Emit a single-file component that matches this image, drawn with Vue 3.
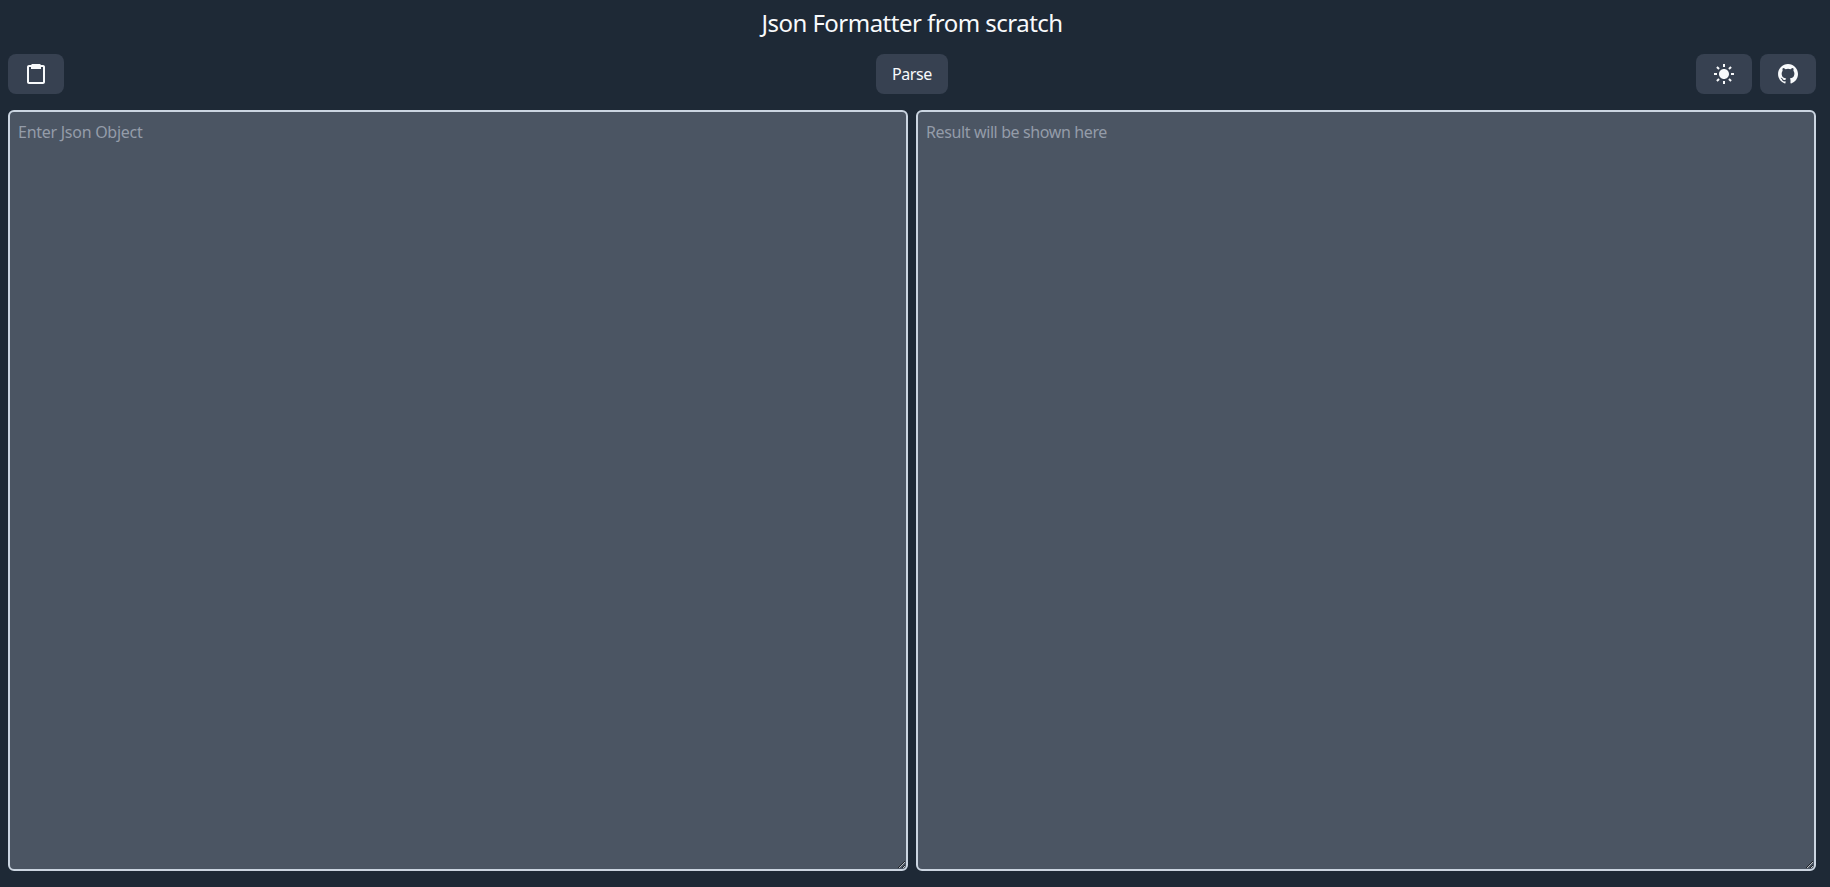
<script setup>
import { ref } from 'vue'

const source = ref('')
const result = ref('')

function parse() {
  try {
    result.value = JSON.stringify(JSON.parse(source.value), null, 2)
  } catch (error) {
    result.value = error.message
  }
}

async function paste() {
  source.value = await navigator.clipboard.readText()
}
</script>

<template>
  <main class="page">
    <h1 class="title">Json Formatter from scratch</h1>
    <div class="toolbar">
      <div class="side">
        <button class="btn" aria-label="Paste" @click="paste">
          <svg viewBox="0 0 24 24" fill="currentColor">
            <path d="M19 3h-2.25a1 1 0 0 0-1-1h-7.5a1 1 0 0 0-1 1H5c-1.103 0-2 .897-2 2v15c0 1.103.897 2 2 2h14c1.103 0 2-.897 2-2V5c0-1.103-.897-2-2-2zm0 17H5V5h2v2h10V5h2v15z" />
          </svg>
        </button>
      </div>
      <button class="btn parse" @click="parse">Parse</button>
      <div class="side end">
        <button class="btn" aria-label="Theme">
          <svg viewBox="0 0 24 24" fill="currentColor">
            <path d="M6.993 12c0 2.761 2.246 5.007 5.007 5.007s5.007-2.246 5.007-5.007S14.761 6.993 12 6.993 6.993 9.239 6.993 12zM10.998 19h2v3h-2zm0-17h2v3h-2zm-9 9h3v2h-3zm17 0h3v2h-3zM4.219 18.363l2.12-2.122 1.415 1.414-2.12 2.122zM16.24 6.344l2.122-2.122 1.414 1.414-2.122 2.122zM6.342 7.759 4.22 5.637l1.415-1.414 2.12 2.122zM19.776 18.364l-1.414 1.414-2.122-2.122 1.414-1.414z" />
          </svg>
        </button>
        <button class="btn" aria-label="GitHub">
          <svg viewBox="0 0 24 24" fill="currentColor">
            <path fill-rule="evenodd" clip-rule="evenodd" d="M12.026 2c-5.509 0-9.974 4.465-9.974 9.974 0 4.406 2.857 8.145 6.821 9.465.499.09.679-.217.679-.481 0-.237-.008-.865-.011-1.696-2.775.602-3.361-1.338-3.361-1.338-.452-1.152-1.107-1.459-1.107-1.459-.905-.619.069-.605.069-.605 1.002.07 1.527 1.028 1.527 1.028.89 1.524 2.336 1.084 2.902.829.091-.645.351-1.085.635-1.334-2.214-.251-4.542-1.107-4.542-4.93 0-1.087.389-1.979 1.024-2.675-.101-.253-.446-1.268.099-2.64 0 0 .837-.269 2.742 1.021a9.582 9.582 0 0 1 2.496-.336 9.554 9.554 0 0 1 2.496.336c1.906-1.291 2.742-1.021 2.742-1.021.545 1.372.203 2.387.099 2.64.64.696 1.024 1.587 1.024 2.675 0 3.833-2.33 4.675-4.552 4.922.355.308.675.916.675 1.846 0 1.334-.012 2.41-.012 2.737 0 .267.178.577.687.479C19.146 20.115 22 16.379 22 11.974 22 6.465 17.535 2 12.026 2z" />
          </svg>
        </button>
      </div>
    </div>
    <div class="panes">
      <textarea v-model="source" class="pane" placeholder="Enter Json Object" spellcheck="false"></textarea>
      <textarea v-model="result" class="pane result" placeholder="Result will be shown here" spellcheck="false"></textarea>
    </div>
  </main>
</template>

<style>
body {
  background: #1e2936;
}
</style>

<style scoped>
.page {
  box-sizing: border-box;
  height: 887px;
  padding: 8px 14px 16px 8px;
  display: flex;
  flex-direction: column;
  background: #1e2936;
  color: #f8fafc;
  font: 16px/24px "Noto Sans", sans-serif;
}
.title {
  margin: 0 0 16px;
  height: 30px;
  font-size: 24px;
  line-height: 30px;
  font-weight: 400;
  letter-spacing: -0.52px;
  text-align: center;
}
.toolbar {
  display: grid;
  grid-template-columns: 1fr auto 1fr;
  margin-bottom: 16px;
}
.side {
  display: flex;
  gap: 8px;
}
.end {
  justify-content: flex-end;
}
.btn {
  box-sizing: border-box;
  height: 40px;
  padding: 8px 16px;
  border: 0;
  border-radius: 8px;
  background: #374151;
  color: inherit;
  font: inherit;
  cursor: pointer;
}
.parse {
  width: 72px;
  letter-spacing: -0.4px;
}
.btn svg {
  display: block;
  width: 24px;
  height: 24px;
}
.panes {
  flex: 1;
  display: grid;
  grid-template-columns: 1fr 1fr;
  gap: 8px;
}
.pane {
  box-sizing: border-box;
  margin: 0;
  padding: 8px;
  border: 2px solid #cbd5e1;
  border-radius: 6px;
  background: #4b5563;
  color: #f8fafc;
  font: inherit;
  letter-spacing: -0.27px;
  outline: none;
  resize: both;
}
.result {
  letter-spacing: -0.38px;
}
.pane::placeholder {
  color: #949ca9;
}
</style>
